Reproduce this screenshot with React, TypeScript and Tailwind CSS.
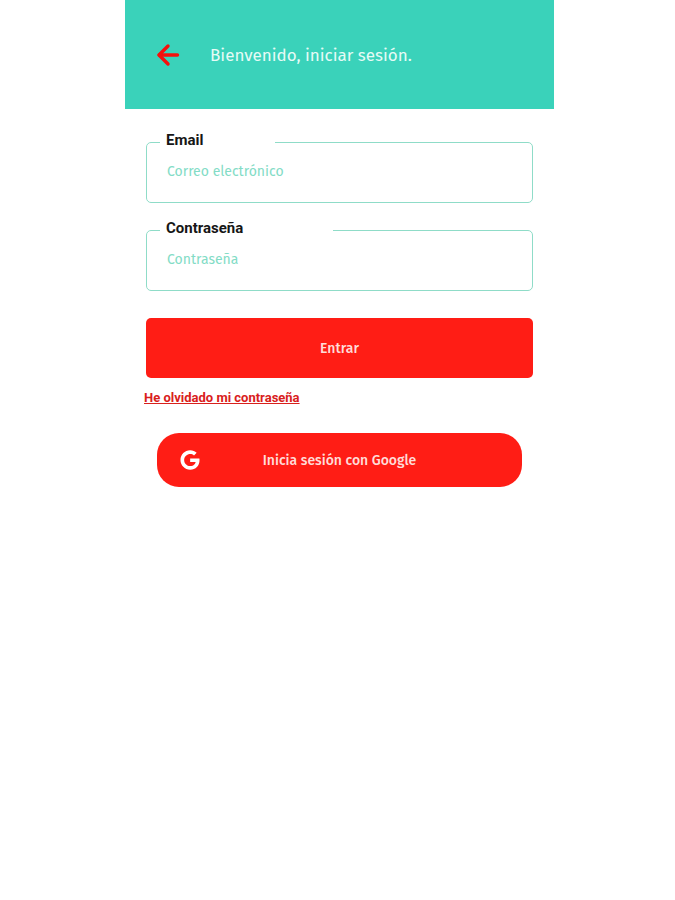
import React from "react";
import { FaGoogle } from "react-icons/fa";

const ArrowIcon = () => (
  <svg
    viewBox="0 0 24 24"
    className="size-6"
    fill="none"
    stroke="currentColor"
    strokeWidth="3.4"
    strokeLinecap="round"
    strokeLinejoin="round"
    aria-hidden="true"
  >
    <path d="M21.5 12H3.2" />
    <path d="M12 3L3 12l9 9" />
  </svg>
);

const Field = ({
  id,
  label,
  type,
  placeholder,
  legendClass,
}: {
  id: string;
  label: string;
  type: string;
  placeholder: string;
  legendClass: string;
}) => {
  return (
    <fieldset className="min-w-0 rounded-[5px] border border-[#8fdcc8] pl-[13px] pr-3 pb-3">
      <legend className={legendClass}>
        <label
          htmlFor={id}
          className="block pb-1 pl-[6px] font-['Roboto',sans-serif] text-[15px] leading-4 font-bold text-[#161616]"
        >
          {label}
        </label>
      </legend>
      <input
        id={id}
        type={type}
        placeholder={placeholder}
        className="block h-[38px] w-full bg-transparent pl-[7px] text-[14px] text-[#2bb89c] outline-none placeholder:text-[#83dcc6]"
      />
    </fieldset>
  );
};

const App = () => {
  return (
    <div className="min-h-screen bg-white pl-1 font-['Fira_Sans','Noto_Sans',sans-serif]">
      <div className="mx-auto w-full max-w-[429px]">
        <header className="flex items-center gap-[30px] bg-[#3ad2ba] py-[41px] pl-[31px]">
          <button type="button" aria-label="Volver" className="text-[#f5100c]">
            <ArrowIcon />
          </button>
          <h1 className="pt-[2px] text-[17px] leading-[25px] text-[#e6fbf6]">
            Bienvenido, iniciar sesión.
          </h1>
        </header>

        <form className="px-[21px] pt-[23px]">
          <div className="flex flex-col gap-[17px]">
            <Field
              id="email"
              label="Email"
              type="email"
              placeholder="Correo electrónico"
              legendClass="w-[115px]"
            />
            <Field
              id="password"
              label="Contraseña"
              type="password"
              placeholder="Contraseña"
              legendClass="w-[173px]"
            />
          </div>

          <button
            type="submit"
            className="mt-[27px] h-[60px] w-full rounded-[5px] bg-[#ff1d15] text-[14px] font-medium text-[#ffdcd8]"
          >
            Entrar
          </button>
          <a
            href="#"
            className="-ml-[2px] mt-[10px] block w-fit font-['Roboto',sans-serif] text-[13px] leading-5 font-bold text-[#d9201c] underline"
          >
            He olvidado mi contraseña
          </a>

          <div className="mt-[25px] px-[11px]">
            <button
              type="button"
              className="grid h-[54px] w-full grid-cols-[1fr_auto_1fr] items-center rounded-[22px] bg-[#ff1d15] text-[14px] font-medium text-[#ffdcd8]"
            >
              <FaGoogle className="ml-[23px] size-5 text-white" />
              <span>Inicia sesión con Google</span>
            </button>
          </div>
        </form>
      </div>
    </div>
  );
};

export default App;
